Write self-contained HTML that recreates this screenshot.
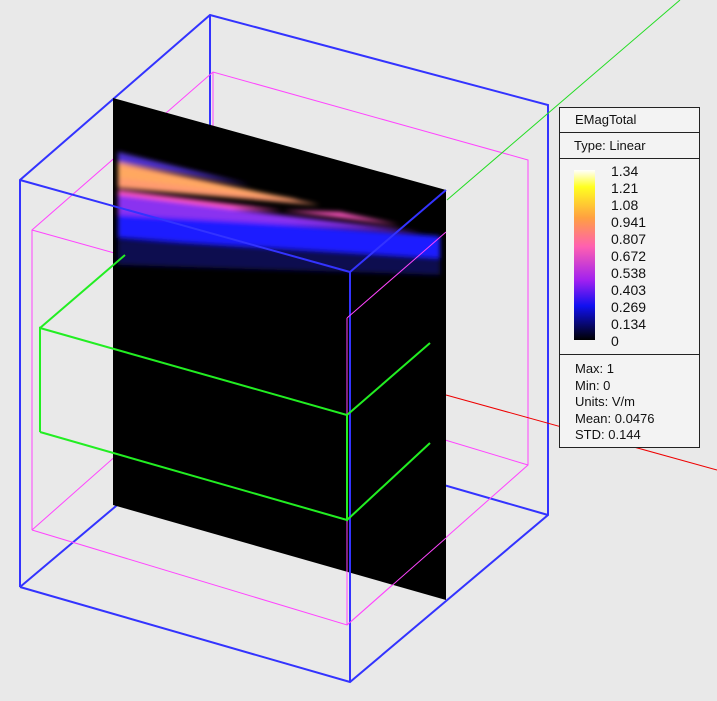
<!DOCTYPE html><html><head><style>
html,body{margin:0;padding:0;background:#e9e9e9;}
#c{position:relative;width:717px;height:701px;overflow:hidden;font-family:"Liberation Sans",sans-serif;}
#lg{position:absolute;left:559px;top:107px;width:139px;height:339px;background:#f3f3f3;border:1px solid #222;font-size:13px;color:#111;}
.r{border-bottom:1px solid #222;}
</style></head><body><div id="c">
<svg width="717" height="701" style="position:absolute;left:0;top:0">
<defs>
<filter id="b"><feGaussianBlur stdDeviation="2.5"/></filter>
<clipPath id="cp"><polygon points="113,98 446,190 446,600 113,505"/></clipPath>
</defs>
<g fill="none" stroke-width="1">
<polyline stroke="#3333ff" stroke-width="2" points="20,587 20,180 210,15 548,105 548,515 350,682 20,587"/>
<polyline stroke="#3333ff" stroke-width="2" points="20,587 218,420 548,515"/>
<line stroke="#3333ff" stroke-width="2" x1="210" y1="15" x2="210" y2="420"/>
<polyline stroke="#ff44ff" points="32,530 32,230 213,72 528,160 528,465 347,625 32,530"/>
<polyline stroke="#ff44ff" points="32,530 213,370 528,465"/>
<line stroke="#ff44ff" x1="213" y1="72" x2="213" y2="370"/>
<line stroke="#ff44ff" x1="32" y1="230" x2="347" y2="318"/>
<line stroke="#22dd22" x1="447" y1="200" x2="680" y2="0"/>
<line stroke="#ee0000" x1="446" y1="395" x2="717" y2="470"/>
</g>
<polygon points="113,98 446,190 446,600 113,505" fill="#000"/>
<g clip-path="url(#cp)" filter="url(#b)">
<polygon points="118,240 440,250 440,275 118,265" fill="#0a0850"/>
<polygon points="118,212 440,236 440,258 118,238" fill="#1a1aff"/>
<polygon points="118,190 400,225 340,212 118,206" fill="#ff55c0"/>
<polygon points="118,195 420,232 118,215" fill="#8a30f0"/>
<polygon points="118,162 320,205 118,188" fill="#ff9a70"/>
<polygon points="118,166 300,200 118,178" fill="#ffa860"/>
<polygon points="118,152 250,185 118,162" fill="#5030d0"/>
</g>
<g fill="none">
<line stroke="#3333ff" stroke-width="2" x1="20" y1="180" x2="350" y2="272"/>
<line stroke="#3333ff" stroke-width="2" x1="350" y1="272" x2="446" y2="190"/>
<line stroke="#3333ff" stroke-width="2" x1="350" y1="272" x2="350" y2="682"/>
<line stroke="#ff44ff" x1="347" y1="318" x2="446" y2="232"/>
<line stroke="#ff44ff" x1="347" y1="318" x2="347" y2="625"/>
<line stroke="#ff44ff" x1="347" y1="625" x2="446" y2="538"/>
<polyline stroke="#22ee22" stroke-width="2" points="40,432 40,328 347,415 347,520 40,432"/>
<line stroke="#22ee22" stroke-width="2" x1="40" y1="328" x2="125" y2="255"/>
<line stroke="#22ee22" stroke-width="2" x1="347" y1="415" x2="430" y2="343"/>
<line stroke="#22ee22" stroke-width="2" x1="347" y1="520" x2="430" y2="443"/>
</g>
</svg>
<div id="lg">
<div class="r" style="height:24px;line-height:24px;padding-left:15px">EMagTotal</div>
<div class="r" style="height:25px;line-height:25px;padding-left:14px">Type: Linear</div>
<div class="r" style="height:195px;position:relative">
<div style="position:absolute;left:14px;top:11px;width:21px;height:170px;background:linear-gradient(#fff,#ffff20 10%,#ffa040 28%,#ff60b0 45%,#a020f0 65%,#1010f0 80%,#000 100%)"></div>
<div style="position:absolute;left:51px;top:4px;line-height:17px;font-size:14px">1.34<br>1.21<br>1.08<br>0.941<br>0.807<br>0.672<br>0.538<br>0.403<br>0.269<br>0.134<br>0</div>
</div>
<div style="padding:6px 0 0 15px;line-height:16.5px">Max: 1<br>Min: 0<br>Units: V/m<br>Mean: 0.0476<br>STD: 0.144</div>
</div>
</div></body></html>
